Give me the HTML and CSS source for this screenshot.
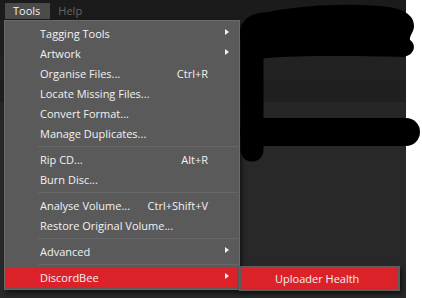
FILE: index.html
```html
<!DOCTYPE html>
<html lang="en">
<head>
  <meta charset="UTF-8">
  <title>Tools menu</title>
  <link rel="stylesheet" href="styles.css">
</head>
<body>
<div class="app">
  <div class="menubar">
    <span class="menubar-item active">Tools</span>
    <span class="menubar-item dim">Help</span>
  </div>
  <div class="workspace">
    <div class="band band-a"></div>
    <div class="band band-b"></div>
    <div class="band band-c"></div>
    <div class="band band-d"></div>
  </div>

  <div class="dropdown">
    <div class="item"><span class="label">Tagging Tools</span><span class="key"></span><span class="sub"><i class="arrow"></i></span></div>
    <div class="item"><span class="label">Artwork</span><span class="key"></span><span class="sub"><i class="arrow"></i></span></div>
    <div class="item"><span class="label">Organise Files...</span><span class="key">Ctrl+R</span><span class="sub"></span></div>
    <div class="item"><span class="label">Locate Missing Files...</span><span class="key"></span><span class="sub"></span></div>
    <div class="item"><span class="label">Convert Format...</span><span class="key"></span><span class="sub"></span></div>
    <div class="item"><span class="label">Manage Duplicates...</span><span class="key"></span><span class="sub"></span></div>
    <div class="sep"></div>
    <div class="item"><span class="label">Rip CD...</span><span class="key">Alt+R</span><span class="sub"></span></div>
    <div class="item"><span class="label">Burn Disc...</span><span class="key"></span><span class="sub"></span></div>
    <div class="sep"></div>
    <div class="item"><span class="label">Analyse Volume...</span><span class="key">Ctrl+Shift+V</span><span class="sub"></span></div>
    <div class="item"><span class="label">Restore Original Volume...</span><span class="key"></span><span class="sub"></span></div>
    <div class="sep"></div>
    <div class="item"><span class="label">Advanced</span><span class="key"></span><span class="sub"><i class="arrow"></i></span></div>
    <div class="sep"></div>
    <div class="item selected"><span class="label">DiscordBee</span><span class="key"></span><span class="sub"><i class="arrow"></i></span></div>
  </div>

  <div class="submenu">
    <div class="item selected"><span class="label">Uploader Health</span></div>
  </div>

  <svg class="scribble" width="190" height="170" viewBox="236 0 190 170">
    <path d="M240 32 C242 18 252 13 268 12 C300 6 340 3 380 6 C402 8 414 14 414 26 C414 32 409 36 410 40 C416 44 416 54 404 57 C360 56 300 55 268 58 C250 60 240 50 240 32 Z" fill="#000"/>
    <line x1="252" y1="34" x2="252" y2="150" stroke="#000" stroke-width="23" stroke-linecap="round"/>
    <line x1="254" y1="132" x2="406" y2="132" stroke="#000" stroke-width="28" stroke-linecap="round"/>
  </svg>
</div>
</body>
</html>
```

FILE: styles.css
```css
body { margin: 0; background: #fff; font-family: "Open Sans", "Noto Sans", sans-serif; font-size: 11px; color: #f2f2f2; }

.app { position: relative; width: 406px; height: 298px; background: #282828; overflow: visible; }

.menubar { display: flex; height: 20px; background: #1b1b1b; padding-left: 5px; box-sizing: border-box; padding-top: 3px; }
.menubar-item { height: 16px; line-height: 15px; padding: 0 10px 0 8px; }
.menubar-item.active { background: #4b4b4b; color: #f0f0f0; }
.menubar-item.dim { color: #676767; }

.workspace { display: flex; flex-direction: column; }
.band-a { height: 35px; background: #1f1f1f; }
.band-b { height: 25px; background: #222; }
.band-c { height: 22px; background: #1f1f1f; }
.band-d { height: 18px; background: #262626; }

.dropdown { position: absolute; left: 4px; top: 20px; width: 236px; box-sizing: border-box; background: #5a5a5a; border: 1px solid #6a6a6a; padding: 2px 1px; box-shadow: 2px 3px 4px rgba(0, 0, 0, 0.55); }
.item { display: flex; align-items: center; height: 20px; }
.item .label { flex: 1; padding-left: 34px; white-space: nowrap; }
.item .key { text-align: right; white-space: nowrap; }
.item .sub { width: 30px; height: 20px; position: relative; flex: none; }
.arrow { position: absolute; left: 17px; top: 6px; width: 0; height: 0; border-left: 4px solid #f0f0f0; border-top: 3.5px solid transparent; border-bottom: 3.5px solid transparent; }
.item.selected { background: #dc2229; }
.sep { height: 6px; display: flex; align-items: center; padding-left: 32px; }
.sep::after { content: ""; flex: 1; height: 1px; background: #676767; }

.submenu { position: absolute; left: 239px; top: 266px; width: 161px; box-sizing: border-box; background: #5a5a5a; border: 1px solid #5e5e5e; padding: 1px; box-shadow: 2px 3px 4px rgba(0, 0, 0, 0.55); }
.submenu .item { height: 21px; }

.scribble { position: absolute; left: 236px; top: 0; }
```
